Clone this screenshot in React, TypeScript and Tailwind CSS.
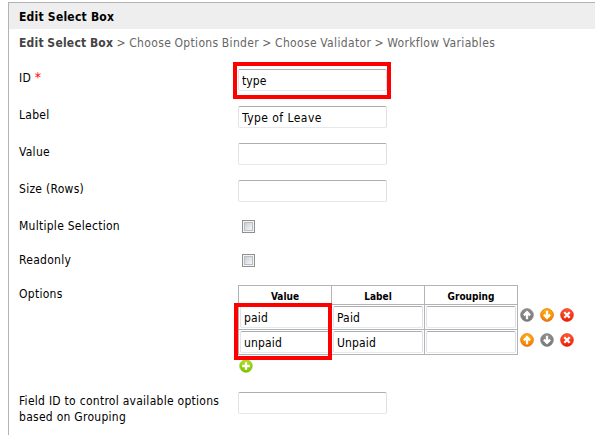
import type { ReactNode } from "react";

const STEPS = "Choose Options Binder > Choose Validator > Workflow Variables";

const OPTIONS = [
  { value: "paid", label: "Paid", grouping: "" },
  { value: "unpaid", label: "Unpaid", grouping: "" },
];

const COLORS = {
  grey: ["#8f8f8f", "#777777"],
  orange: ["#ffb400", "#f47a00"],
  red: ["#ff5a3a", "#f01c00"],
  green: ["#b4e024", "#7cc000"],
};

const RIMS = { grey: "#777777", orange: "#d9480f", red: "#e01000", green: "#8cc820" };

const PATHS = {
  up: "M7 11.2V4.5M3.9 7.4L7 4.2L10.1 7.4",
  down: "M7 2.8V9.5M3.9 6.6L7 9.8L10.1 6.6",
  remove: "M4.3 4.3L9.7 9.7M9.7 4.3L4.3 9.7",
  add: "M7 3.2V10.8M3.2 7H10.8",
};

function RoundIcon({ shape, color }: { shape: keyof typeof PATHS; color: keyof typeof COLORS }) {
  const [top, bottom] = COLORS[color];
  return (
    <svg width="14" height="14" viewBox="0 0 14 14" className="block">
      <defs>
        <linearGradient id={color} x1="0" y1="0" x2="0" y2="1">
          <stop offset="0" stopColor={top} />
          <stop offset="1" stopColor={bottom} />
        </linearGradient>
      </defs>
      <circle cx="7" cy="7" r="6.4" fill={`url(#${color})`} stroke={RIMS[color]} strokeOpacity="0.7" strokeWidth="0.8" />
      <path d={PATHS[shape]} fill="none" stroke="#fff" strokeWidth="2.3" />
    </svg>
  );
}

function TextInput({ defaultValue = "", className = "" }: { defaultValue?: string; className?: string }) {
  return (
    <input
      type="text"
      defaultValue={defaultValue}
      className={`block h-[22px] rounded-[2px] border border-t-[#abadb3] border-r-[#dbdfe6] border-b-[#e3e9ef] border-l-[#e2e3ea] bg-white px-[3px] pt-px text-black outline-none ${className}`}
    />
  );
}

function Checkbox() {
  return (
    <span className="mt-[3px] ml-1 block size-[13px] border border-[#8e8f8f] bg-[#f4f4f4] p-px">
      <span className="block size-full border border-[#b9bec5] bg-linear-to-br from-[#cbcfd5] to-[#f6f6f6]" />
    </span>
  );
}

function Row({ label, className = "", children }: { label: ReactNode; className?: string; children: ReactNode }) {
  return (
    <div className={`flex items-start ${className}`}>
      <div className="w-[219px] shrink-0 pt-px whitespace-nowrap">{label}</div>
      {children}
    </div>
  );
}

export default function App() {
  return (
    <div className="h-[435px] w-[595px] overflow-hidden bg-white pt-[2px] pl-2 font-['DejaVu_Sans_Condensed','DejaVu_Sans',sans-serif] text-[12px] leading-4 tracking-[0.27px] text-black [font-stretch:condensed]">
      <div className="h-full border-t border-l border-[#b3b3b3]">
        <h1 className="h-[26px] bg-[#eeeeee] pt-[6px] pl-[10px] font-bold tracking-[0.23px]">Edit Select Box</h1>
        <div className="h-[40px] pt-[6px] pl-[10px] whitespace-nowrap text-[#666] [word-spacing:-0.5px]">
          <b className="tracking-[0.23px] text-[#444]">Edit Select Box</b>
          <span className="tracking-[0.35px]"> &gt; {STEPS}</span>
        </div>

        <div className="pl-[10px]">
          <Row
            className="h-[37px]"
            label={
              <>
                ID <span className="text-[14px] leading-none text-[#f00]">*</span>
              </>
            }
          >
            <div className="relative">
              <TextInput defaultValue="type" className="w-[149px] tracking-[0.1px]" />
              <div className="pointer-events-none absolute -top-[7px] -left-[5px] h-[37px] w-[158px] border-4 border-[#f00]" />
            </div>
          </Row>
          <Row className="h-[37px]" label="Label">
            <TextInput defaultValue="Type of Leave" className="w-[149px] tracking-[0.45px]" />
          </Row>
          <Row className="h-[37px]" label="Value">
            <TextInput className="w-[149px]" />
          </Row>
          <Row className="h-[37px]" label="Size (Rows)">
            <TextInput className="w-[149px]" />
          </Row>
          <Row className="h-[34px]" label="Multiple Selection">
            <Checkbox />
          </Row>
          <Row className="h-[34px]" label="Readonly">
            <Checkbox />
          </Row>
          <Row className="h-[107px]" label="Options">
            <div className="relative">
              <div className="flex">
                <table className="w-[280px] table-fixed border-collapse">
                  <thead>
                    <tr className="h-[19px]">
                      {["Value", "Label", "Grouping"].map((head) => (
                        <th key={head} className="border border-[#b3b3b3] p-0 pt-[3px] text-[10px] leading-[15px] font-bold tracking-normal">
                          {head}
                        </th>
                      ))}
                    </tr>
                  </thead>
                  <tbody>
                    {OPTIONS.map((option) => (
                      <tr key={option.value} className="h-[25px]">
                        {[option.value, option.label, option.grouping].map((text, i) => (
                          <td key={i} className="border border-[#b3b3b3] p-px">
                            <TextInput defaultValue={text} className="w-[90px] tracking-[0.15px]" />
                          </td>
                        ))}
                      </tr>
                    ))}
                  </tbody>
                </table>
                <div className="flex flex-col gap-[11px] pt-[23px] pl-[2px]">
                  <div className="flex gap-[6px]">
                    <RoundIcon shape="up" color="grey" />
                    <RoundIcon shape="down" color="orange" />
                    <RoundIcon shape="remove" color="red" />
                  </div>
                  <div className="flex gap-[6px]">
                    <RoundIcon shape="up" color="orange" />
                    <RoundIcon shape="down" color="grey" />
                    <RoundIcon shape="remove" color="red" />
                  </div>
                </div>
              </div>
              <div className="pt-[4px] pl-px">
                <RoundIcon shape="add" color="green" />
              </div>
              <div className="pointer-events-none absolute top-[18px] -left-1 h-[57px] w-[98px] border-4 border-[#f00]" />
            </div>
          </Row>
          <Row
            label={
              <>
                Field ID to control available options
                <br />
                based on Grouping
              </>
            }
          >
            <TextInput className="w-[149px]" />
          </Row>
        </div>
      </div>
    </div>
  );
}
